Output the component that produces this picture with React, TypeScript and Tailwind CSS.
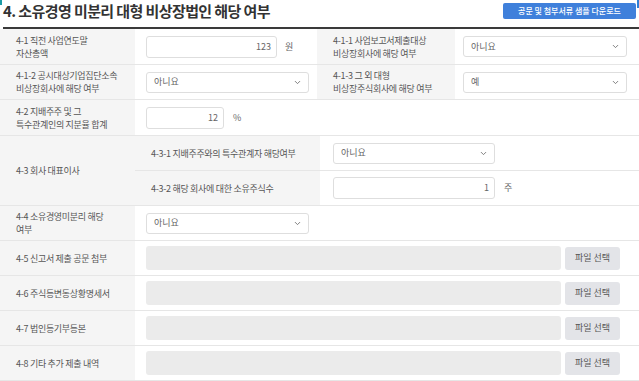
import { ChevronDown } from "lucide-react";

const font = { fontFamily: '"Noto Sans CJK KR", "Noto Sans", sans-serif' };

function Label({ lines, className = "" }: { lines: string[]; className?: string }) {
  return (
    <div className={`bg-[#f5f5f5] pl-[16px] flex flex-col justify-center text-[9px] leading-[13px] text-[#555] tracking-[-0.3px] ${className}`}>
      {lines.map((l) => (
        <span key={l}>{l}</span>
      ))}
    </div>
  );
}

function Select({ value, w }: { value: string; w: string }) {
  return (
    <div className={`${w} h-[21px] border border-[#dedede] rounded-[3px] bg-white flex items-center justify-between pl-[7px] pr-[6px] text-[9px] text-[#666]`}>
      <span>{value}</span>
      <ChevronDown className="w-[9px] h-[9px] text-[#777]" strokeWidth={2.5} />
    </div>
  );
}

function NumInput({ value, w }: { value: string; w: string }) {
  return (
    <div className={`${w} h-[22px] border border-[#dedede] rounded-[3px] bg-white flex items-center justify-end pr-[5px] text-[9px] text-[#666]`}>
      {value}
    </div>
  );
}

function FileRow({ label }: { label: string }) {
  return (
    <div className="grid grid-cols-[135px_1fr] h-[35px] border-b border-[#e6e6e6]">
      <Label lines={[label]} />
      <div className="flex items-center pl-[11px] gap-[4px]">
        <div className="w-[415px] h-[24px] rounded-[3px] bg-[#ebebeb]" />
        <button className="w-[55px] h-[23px] rounded-[3px] bg-[#e3e4e8] text-[9px] text-[#555]">파일 선택</button>
      </div>
    </div>
  );
}

export default function App() {
  return (
    <div className="relative w-[639px] h-[381px] overflow-hidden bg-white" style={font}>
      <div className="absolute left-0 top-0 w-[2px] h-[5px] bg-[#1b9aa5]" />
      <div className="absolute right-0 top-0 w-[2px] h-[8px] bg-[#2f7fd6]" />

      <div className="flex justify-between items-start h-[27px] pl-[3px] pr-[3px] pt-[1px]">
        <h1 className="text-[15px] leading-[20px] font-bold text-[#333] tracking-[-0.6px]">4. 소유경영 미분리 대형 비상장법인 해당 여부</h1>
        <button className="mt-[2px] w-[133px] h-[16px] rounded-[2px] bg-[#3f80db] text-white text-[8px] leading-[16px] font-medium">
          공문 및 첨부서류 샘플 다운로드
        </button>
      </div>

      <div className="ml-[3px] border-t-[2px] border-[#3a3a3a]" />

      <div className="grid grid-cols-[135px_182px_138px_1fr] h-[36px] border-b border-[#e6e6e6]">
        <Label lines={["4-1 직전 사업연도말", "자산총액"]} />
        <div className="flex items-center pl-[11px] gap-[8px]">
          <NumInput value="123" w="w-[131px]" />
          <span className="text-[9px] text-[#666]">원</span>
        </div>
        <Label lines={["4-1-1 사업보고서제출대상", "비상장회사에 해당 여부"]} />
        <div className="flex items-center pl-[8px]">
          <Select value="아니요" w="w-[164px]" />
        </div>
      </div>

      <div className="grid grid-cols-[135px_182px_138px_1fr] h-[35px] border-b border-[#e6e6e6]">
        <Label lines={["4-1-2 공시대상기업집단소속", "비상장회사에 해당 여부"]} />
        <div className="flex items-center pl-[11px]">
          <Select value="아니요" w="w-[163px]" />
        </div>
        <Label lines={["4-1-3 그 외 대형", "비상장주식회사에 해당 여부"]} />
        <div className="flex items-center pl-[8px]">
          <Select value="예" w="w-[164px]" />
        </div>
      </div>

      <div className="grid grid-cols-[135px_1fr] h-[36px] border-b border-[#e6e6e6]">
        <Label lines={["4-2 지배주주 및 그", "특수관계인의 지분율 합계"]} />
        <div className="flex items-center pl-[11px] gap-[9px]">
          <NumInput value="12" w="w-[78px]" />
          <span className="text-[9px] text-[#666]">%</span>
        </div>
      </div>

      <div className="grid grid-cols-[135px_1fr] h-[70px] border-b border-[#e6e6e6]">
        <Label lines={["4-3 회사 대표이사"]} />
        <div className="flex flex-col">
          <div className="grid grid-cols-[185px_1fr] h-[35px] border-b border-[#e6e6e6]">
            <Label lines={["4-3-1 지배주주와의 특수관계자 해당여부"]} className="pl-[12px]" />
            <div className="flex items-center pl-[13px]">
              <Select value="아니요" w="w-[162px]" />
            </div>
          </div>
          <div className="grid grid-cols-[185px_1fr] h-[34px]">
            <Label lines={["4-3-2 해당 회사에 대한 소유주식수"]} className="pl-[12px]" />
            <div className="flex items-center pl-[13px] gap-[9px]">
              <NumInput value="1" w="w-[162px]" />
              <span className="text-[9px] text-[#666]">주</span>
            </div>
          </div>
        </div>
      </div>

      <div className="grid grid-cols-[135px_1fr] h-[35px] border-b border-[#e6e6e6]">
        <Label lines={["4-4 소유경영미분리 해당", "여부"]} />
        <div className="flex items-center pl-[11px]">
          <Select value="아니요" w="w-[163px]" />
        </div>
      </div>

      <FileRow label="4-5 신고서 제출 공문 첨부" />
      <FileRow label="4-6 주식등변동상황명세서" />
      <FileRow label="4-7 법인등기부등본" />
      <FileRow label="4-8 기타 추가 제출 내역" />
    </div>
  );
}
